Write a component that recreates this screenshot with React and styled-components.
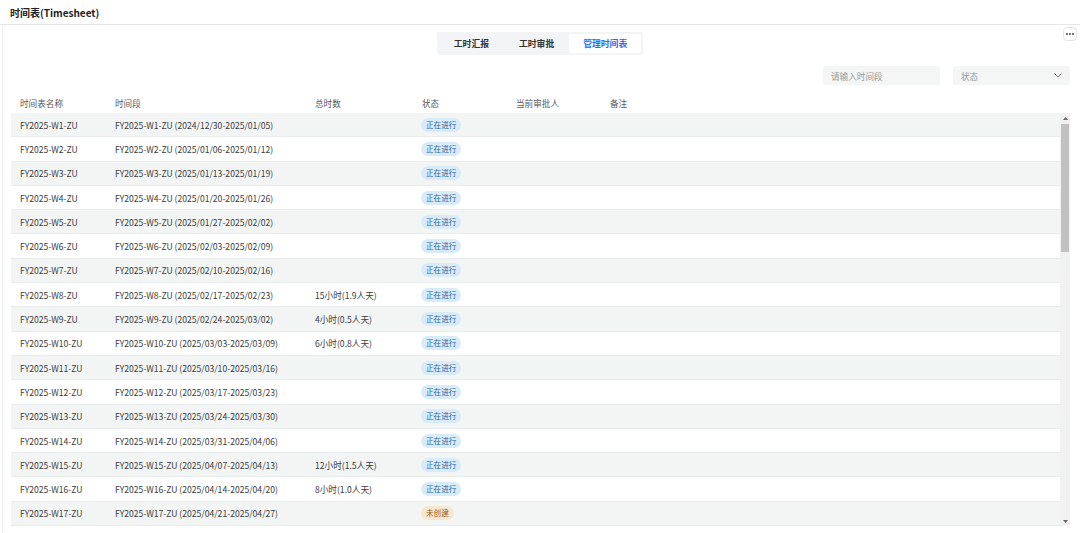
import React from "react";
import styled, { createGlobalStyle } from "styled-components";

const GlobalStyle = createGlobalStyle`
  body {
    margin: 0;
    background: #fff;
    font-family: "Noto Sans CJK SC", "Noto Sans", sans-serif;
    color: #333;
  }
`;

const rows = [
  ["FY2025-W1-ZU", "2024/12/30-2025/01/05", "", "run"],
  ["FY2025-W2-ZU", "2025/01/06-2025/01/12", "", "run"],
  ["FY2025-W3-ZU", "2025/01/13-2025/01/19", "", "run"],
  ["FY2025-W4-ZU", "2025/01/20-2025/01/26", "", "run"],
  ["FY2025-W5-ZU", "2025/01/27-2025/02/02", "", "run"],
  ["FY2025-W6-ZU", "2025/02/03-2025/02/09", "", "run"],
  ["FY2025-W7-ZU", "2025/02/10-2025/02/16", "", "run"],
  ["FY2025-W8-ZU", "2025/02/17-2025/02/23", "15小时(1.9人天)", "run"],
  ["FY2025-W9-ZU", "2025/02/24-2025/03/02", "4小时(0.5人天)", "run"],
  ["FY2025-W10-ZU", "2025/03/03-2025/03/09", "6小时(0.8人天)", "run"],
  ["FY2025-W11-ZU", "2025/03/10-2025/03/16", "", "run"],
  ["FY2025-W12-ZU", "2025/03/17-2025/03/23", "", "run"],
  ["FY2025-W13-ZU", "2025/03/24-2025/03/30", "", "run"],
  ["FY2025-W14-ZU", "2025/03/31-2025/04/06", "", "run"],
  ["FY2025-W15-ZU", "2025/04/07-2025/04/13", "12小时(1.5人天)", "run"],
  ["FY2025-W16-ZU", "2025/04/14-2025/04/20", "8小时(1.0人天)", "run"],
  ["FY2025-W17-ZU", "2025/04/21-2025/04/27", "", "new"],
];

const columns = ["时间表名称", "时间段", "总时数", "状态", "当前审批人", "备注"];

const App = () => {
  return (
    <Page>
      <GlobalStyle />
      <TitleBar>时间表(Timesheet)</TitleBar>
      <Body>
        <TabRow>
          <Tabs>
            <Tab>工时汇报</Tab>
            <Tab>工时审批</Tab>
            <Tab active>管理时间表</Tab>
          </Tabs>
          <MoreButton>
            <svg width="8" height="2" viewBox="0 0 8 2">
              <circle cx="1" cy="1" r="0.9" fill="#333" />
              <circle cx="4" cy="1" r="0.9" fill="#333" />
              <circle cx="7" cy="1" r="0.9" fill="#333" />
            </svg>
          </MoreButton>
        </TabRow>
        <Filters>
          <Field>请输入时间段</Field>
          <Field>
            状态
            <svg width="8" height="5" viewBox="0 0 8 5">
              <path d="M0.6 0.6 L4 4 L7.4 0.6" fill="none" stroke="#777" strokeWidth="1" />
            </svg>
          </Field>
        </Filters>
        <Table>
          <HeadRow>
            {columns.map((c) => (
              <Cell key={c}>{c}</Cell>
            ))}
          </HeadRow>
          <BodyWrap>
            <Rows>
              {rows.map(([name, range, hours, status], i) => (
                <Row key={name} striped={i % 2 === 0}>
                  <Cell>{name}</Cell>
                  <Cell>{`${name} (${range})`}</Cell>
                  <Cell>{hours}</Cell>
                  <Cell>
                    {status === "run" ? <Tag>正在进行</Tag> : <Tag warn>未创建</Tag>}
                  </Cell>
                  <Cell />
                  <Cell />
                </Row>
              ))}
            </Rows>
            <ScrollBar>
              <Arrow>
                <svg width="5" height="3" viewBox="0 0 5 3"><path d="M0 3 L2.5 0 L5 3 Z" fill="#666" /></svg>
              </Arrow>
              <Track>
                <Thumb />
              </Track>
              <Arrow>
                <svg width="5" height="3" viewBox="0 0 5 3"><path d="M0 0 L2.5 3 L5 0 Z" fill="#666" /></svg>
              </Arrow>
            </ScrollBar>
          </BodyWrap>
        </Table>
      </Body>
    </Page>
  );
};

const widths = ["95px", "200px", "107px", "94px", "94px", "1fr"];

const Page = styled.div`
  width: 1080px;
  height: 533px;
  overflow: hidden;
  background: #fff;
`;

const TitleBar = styled.div`
  height: 25px;
  box-sizing: border-box;
  padding: 5px 10px 0;
  font-size: 10px;
  font-weight: 700;
  color: #222;
  border-bottom: 1px solid #e6e6e6;
`;

const Body = styled.div`
  margin-left: 2px;
  border-left: 1px solid #f0f0f0;
  padding: 0 10px 0 8px;
  height: 508px;
`;

const TabRow = styled.div`
  position: relative;
  display: flex;
  justify-content: center;
  padding-top: 7px;
  margin-left: -1px;
`;

const Tabs = styled.div`
  display: flex;
  background: #f3f4f5;
  padding: 2px;
  border-radius: 2px;
  height: 23px;
  box-sizing: border-box;
`;

const Tab = styled.div`
  height: 19px;
  line-height: 19px;
  padding: 0 ${(p) => (p.active ? "14px" : "15px")};
  font-size: 8.8px;
  font-weight: 700;
  color: ${(p) => (p.active ? "#1f6cf5" : "#333")};
  background: ${(p) => (p.active ? "#fff" : "transparent")};
  border-radius: 2px;
`;

const MoreButton = styled.div`
  position: absolute;
  right: -7px;
  top: 2px;
  width: 14px;
  height: 14px;
  box-sizing: border-box;
  border: 1px solid #e4e4e4;
  border-radius: 4px;
  background: #fff;
  display: flex;
  align-items: center;
  justify-content: center;
`;

const Filters = styled.div`
  display: flex;
  justify-content: flex-end;
  gap: 13px;
  margin-top: 11px;
`;

const Field = styled.div`
  width: 117px;
  height: 19px;
  box-sizing: border-box;
  background: #f4f5f5;
  border-radius: 2px;
  padding: 0 8px;
  display: flex;
  align-items: center;
  justify-content: space-between;
  font-size: 8.6px;
  color: #9a9a9a;
`;

const Table = styled.div`
  margin-top: 7px;
`;

const HeadRow = styled.div`
  display: grid;
  grid-template-columns: ${widths.join(" ")};
  height: 21px;
  align-items: center;
  padding-left: 9px;
  font-size: 8.6px;
  color: #5a5a5a;
`;

const BodyWrap = styled.div`
  display: flex;
`;

const Rows = styled.div`
  flex: 1;
`;

const Row = styled.div`
  display: grid;
  grid-template-columns: ${widths.join(" ")};
  height: 24.3px;
  box-sizing: border-box;
  align-items: center;
  padding-left: 9px;
  font-size: 8.6px;
  color: #3c3c3c;
  background: ${(p) => (p.striped ? "#f3f5f5" : "#fff")};
  border-bottom: 1px solid #e9ecec;
`;

const Cell = styled.div`
  white-space: nowrap;
  display: flex;
  align-items: center;
`;

const Tag = styled.span`
  display: inline-block;
  height: 14px;
  line-height: 14px;
  padding: 0 5px;
  border-radius: 7px;
  font-size: 7.6px;
  margin-left: -1px;
  color: ${(p) => (p.warn ? "#9a5a1c" : "#2767a8")};
  background: ${(p) => (p.warn ? "#f8e7cf" : "#d7ebf9")};
`;

const ScrollBar = styled.div`
  width: 10px;
  background: #f1f1f1;
  display: flex;
  flex-direction: column;
  height: 413px;
`;

const Arrow = styled.div`
  height: 10px;
  display: flex;
  align-items: center;
  justify-content: center;
`;

const Track = styled.div`
  flex: 1;
  padding: 1px 1px;
`;

const Thumb = styled.div`
  height: 128px;
  background: #c1c1c1;
`;

export default App;
